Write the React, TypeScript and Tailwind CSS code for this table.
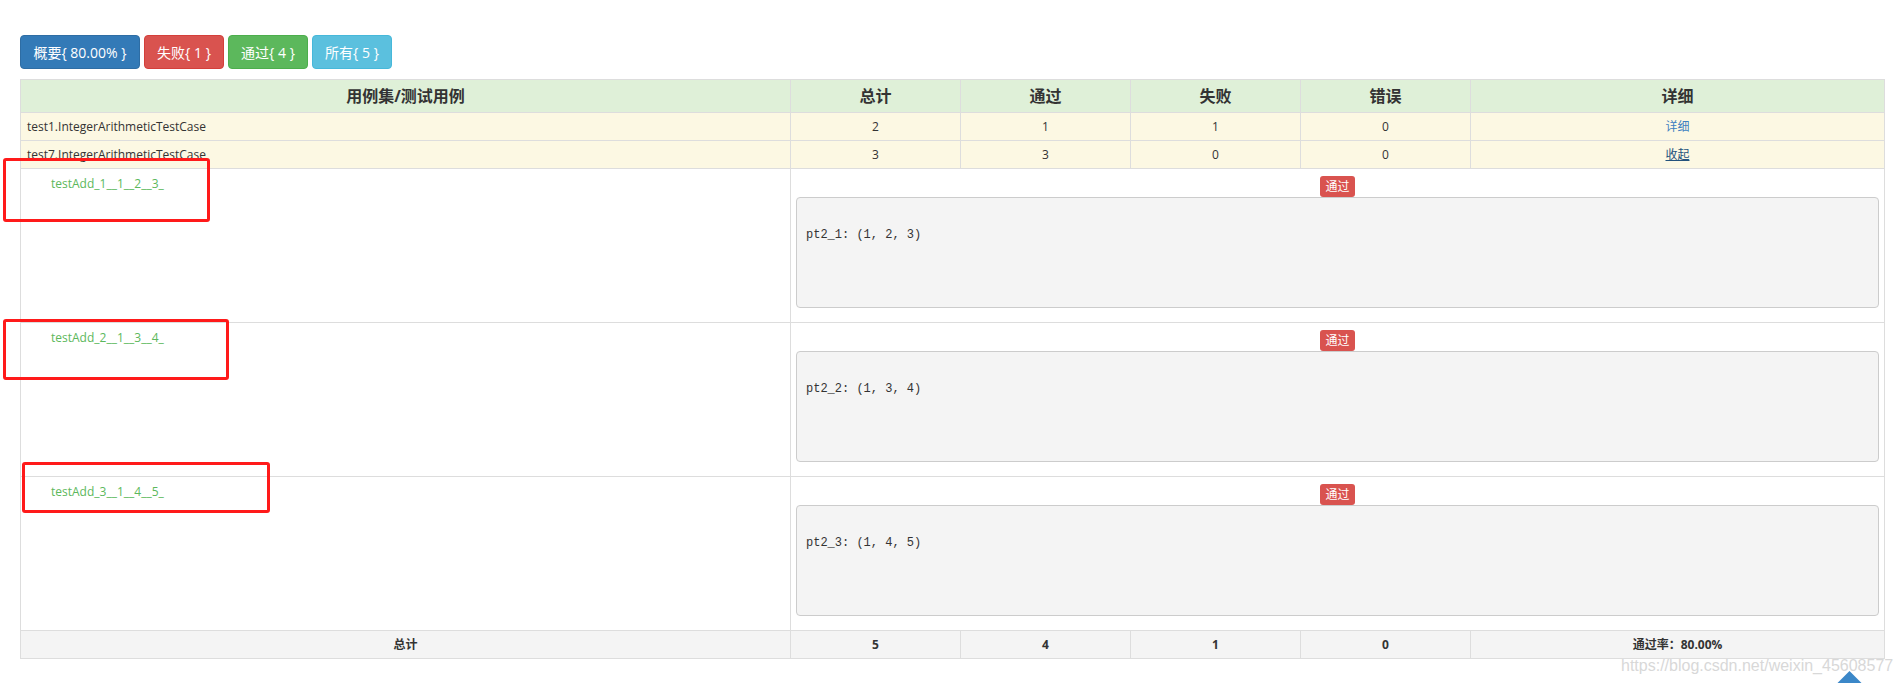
import React from "react"

const suites = [
  { name: "test1.IntegerArithmeticTestCase", total: 2, pass: 1, fail: 1, error: 0, link: "详细", open: false },
  { name: "test7.IntegerArithmeticTestCase", total: 3, pass: 3, fail: 0, error: 0, link: "收起", open: true },
]

const cases = [
  { name: "testAdd_1__1__2__3_", output: "pt2_1: (1, 2, 3)" },
  { name: "testAdd_2__1__3__4_", output: "pt2_2: (1, 3, 4)" },
  { name: "testAdd_3__1__4__5_", output: "pt2_3: (1, 4, 5)" },
]

export default function App() {
  return (
    <div className="relative w-[1901px] h-[683px] overflow-hidden bg-white text-[#333] font-['Open_Sans','Noto_Sans_CJK_SC',sans-serif]">
      <div className="pl-[20px] pt-[35px]">
        {/* Filter buttons */}
        <div className="flex gap-[4px] mb-[10px]">
          <button className="w-[120px] h-[34px] text-[14px] text-white bg-[#337ab7] border border-[#2e6da4] rounded-[4px]">
            概要{"{ 80.00% }"}
          </button>
          <button className="w-[80px] h-[34px] text-[14px] text-white bg-[#d9534f] border border-[#d43f3a] rounded-[4px]">
            失败{"{ 1 }"}
          </button>
          <button className="w-[80px] h-[34px] text-[14px] text-white bg-[#5cb85c] border border-[#4cae4c] rounded-[4px]">
            通过{"{ 4 }"}
          </button>
          <button className="w-[80px] h-[34px] text-[14px] text-white bg-[#5bc0de] border border-[#46b8da] rounded-[4px]">
            所有{"{ 5 }"}
          </button>
        </div>

        {/* Result table */}
        <table className="w-[1864px] table-fixed border-collapse border border-[#ddd] text-[12px]">
          <colgroup>
            <col className="w-[770px]" />
            <col className="w-[170px]" />
            <col className="w-[170px]" />
            <col className="w-[170px]" />
            <col className="w-[170px]" />
            <col className="w-[414px]" />
          </colgroup>
          <thead>
            <tr className="h-[33px] bg-[#dff0d8] text-[16px] font-bold">
              <th className="border border-[#ddd] font-bold">用例集/测试用例</th>
              <th className="border border-[#ddd] font-bold">总计</th>
              <th className="border border-[#ddd] font-bold">通过</th>
              <th className="border border-[#ddd] font-bold">失败</th>
              <th className="border border-[#ddd] font-bold">错误</th>
              <th className="border border-[#ddd] font-bold">详细</th>
            </tr>
          </thead>
          <tbody>
            {suites.map((s) => (
              <tr key={s.name} className="h-[28px] bg-[#fcf8e3]">
                <td className="border border-[#ddd] pl-[6px]">{s.name}</td>
                <td className="border border-[#ddd] text-center">{s.total}</td>
                <td className="border border-[#ddd] text-center">{s.pass}</td>
                <td className="border border-[#ddd] text-center">{s.fail}</td>
                <td className="border border-[#ddd] text-center">{s.error}</td>
                <td className="border border-[#ddd] text-center">
                  {s.open ? (
                    <a className="text-[#23527c] underline">{s.link}</a>
                  ) : (
                    <a className="text-[#3d7fc1]">{s.link}</a>
                  )}
                </td>
              </tr>
            ))}
            {cases.map((c) => (
              <tr key={c.name} className="h-[154px]">
                <td className="border border-[#ddd] align-top pl-[30px] pt-[6px] text-[#5cb85c]">{c.name}</td>
                <td colSpan={5} className="border border-[#ddd] align-top px-[5px] pt-[5px] pb-[5px]">
                  <div className="flex justify-center pt-[2px]">
                    <span className="h-[21px] px-[5px] leading-[21px] text-[12px] text-white bg-[#d9534f] rounded-[3px]">
                      通过
                    </span>
                  </div>
                  <pre className="h-[111px] mb-[9px] px-[9px] py-[9px] bg-[#f4f4f4] border border-[#ccc] rounded-[4px] text-[12px] leading-[18.5px] text-[#333] font-['Liberation_Mono',monospace]">
                    {"\n" + c.output}
                  </pre>
                </td>
              </tr>
            ))}
            <tr className="h-[28px] bg-[#f4f4f4] font-bold">
              <td className="border border-[#ddd] text-center">总计</td>
              <td className="border border-[#ddd] text-center">5</td>
              <td className="border border-[#ddd] text-center">4</td>
              <td className="border border-[#ddd] text-center">1</td>
              <td className="border border-[#ddd] text-center">0</td>
              <td className="border border-[#ddd] text-center">通过率：80.00%</td>
            </tr>
          </tbody>
        </table>
      </div>

      {/* Annotation boxes */}
      <div className="absolute left-[3px] top-[158px] w-[207px] h-[64px] border-[3px] border-[#ff1a1a] rounded-[3px]" />
      <div className="absolute left-[3px] top-[319px] w-[226px] h-[61px] border-[3px] border-[#ff1a1a] rounded-[3px]" />
      <div className="absolute left-[22px] top-[462px] w-[248px] h-[51px] border-[3px] border-[#ff1a1a] rounded-[3px]" />

      {/* Watermark */}
      <div className="absolute left-[1621px] top-[654px] text-[16px] text-[#d8d8d8] font-['Liberation_Sans',sans-serif]">
        https://blog.csdn.net/weixin_45608577
      </div>

      {/* Back to top */}
      <svg className="absolute left-[1837px] top-[671px]" width="25" height="12" viewBox="0 0 25 12">
        <polygon points="12.5,0 25,12.5 0,12.5" fill="#3b87c8" />
      </svg>
    </div>
  )
}
